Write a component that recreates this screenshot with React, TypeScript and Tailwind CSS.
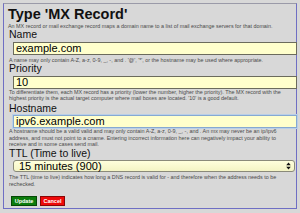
const hint = "text-[5.4px] leading-[6.5px] text-[#4a4a4a] whitespace-nowrap";
const label = "h-[13px] text-[10.5px] leading-[13px] text-[#111]";
const field =
  "ml-[5px] w-[284px] h-[13px] bg-[#ffffcc] border border-[#6b6b5c] px-[2px] text-[11px] leading-[11px] text-black flex items-center";

export default function App() {
  return (
    <div
      className="w-[300px] h-[213px] bg-[#d8d8d8] pt-[3px] pl-[3px] overflow-hidden"
      style={{ fontFamily: '"Liberation Sans", Arial, sans-serif' }}
    >
      <div className="w-[294px] h-[206px] border border-[#6f6fc4] border-t-[#9a9aa8] pl-[4px] flex flex-col">
        <h1 className="mt-[1px] h-[18px] text-[14.5px] leading-[18px] font-bold text-[#111]">
          Type 'MX Record'
        </h1>
        <p className={`${hint} h-[5px] leading-[5px]`}>
          An MX record or mail exchange record maps a domain name to a list of mail exchange servers for that domain.
        </p>

        <div className={`${label} pl-[1px]`}>Name</div>
        <div className={`${field} mt-[1px]`}>example.com</div>
        <p className={`${hint} mt-[2px] h-[5px] leading-[5px] pl-[1px]`}>
          A name may only contain A-Z, a-z, 0-9, _, -, and . '@', '*', or the hostname may be used where appropriate.
        </p>

        <div className={`${label} pl-[1px]`}>Priority</div>
        <div className={`${field} mt-[1px]`}>10</div>
        <p className={`${hint} h-[13px] leading-[6px] pl-[1px]`}>
          To differentiate them, each MX record has a priority (lower the number, higher the priority). The MX record with the
          <br />
          highest priority is the actual target computer where mail boxes are located. '10' is a good default.
        </p>

        <div className={`${label} pl-[1px]`}>Hostname</div>
        <div className={`${field} border-[#86a9d2] shadow-[0_0_0_1px_#b9cfe8]`}>ipv6.example.com</div>
        <p className={`${hint} h-[19px] pl-[1px]`}>
          A hostname should be a valid valid and may only contain A-Z, a-z, 0-9, _, -, and . An mx may never be an ip/ipv6
          <br />
          address, and must not point to a cname. Entering incorrect information here can negatively impact your ability to
          <br />
          receive and in some cases send mail.
        </p>

        <div className={`${label} pl-[1px]`}>TTL (Time to live)</div>
        <div className="ml-[5px] w-[282px] h-[12px] rounded-[3px] border border-[#8a8a7a] bg-gradient-to-b from-[#ffffdc] to-[#f4f4c4] flex items-center justify-between pl-[5px] pr-[3px] text-[11px] leading-[11px] text-black">
          <span>15 minutes (900)</span>
          <svg width="5" height="8" viewBox="0 0 5 8">
            <path d="M2.5 0.5 L4.8 3.3 L0.2 3.3 Z M2.5 7.5 L4.8 4.7 L0.2 4.7 Z" fill="#111" />
          </svg>
        </div>
        <p className={`${hint} mt-[2px] h-[13px] pl-[1px]`}>
          The TTL (time to live) indicates how long a DNS record is valid for - and therefore when the address needs to be
          <br />
          rechecked.
        </p>

        <div className="mt-[9px] flex gap-[3px] pl-[3px]">
          <button className="w-[26px] h-[10px] bg-[#0c7c0c] border border-[#064806] text-white text-[5.5px] font-bold leading-[8px]">
            Update
          </button>
          <button className="w-[25px] h-[10px] bg-[#ee0a0a] border border-[#8a0606] text-white text-[5.5px] font-bold leading-[8px]">
            Cancel
          </button>
        </div>
      </div>
    </div>
  );
}
